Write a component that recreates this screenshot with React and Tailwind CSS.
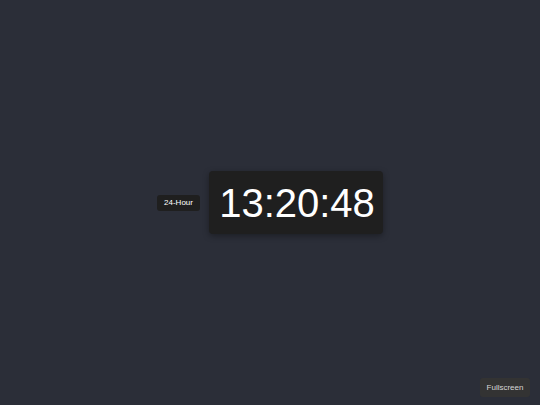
export default function App() {
  return (
    <div className="relative w-full h-screen bg-[#2b2e38] flex items-center justify-center gap-[9px]" style={{ fontFamily: '"Liberation Sans", Arial, sans-serif' }}>
      <button className="h-[16px] w-[43px] rounded-[3px] bg-[#1f1f1f] text-white text-[8px] leading-none flex items-center justify-center">
        24-Hour
      </button>
      <div className="w-[174px] h-[63px] rounded-[4px] bg-[#1f1f1f] shadow-[0_2px_6px_rgba(0,0,0,0.35)] flex items-center justify-center pl-[2px]">
        <span className="text-white text-[40px] leading-none">13:20:48</span>
      </div>
      <button className="absolute right-[10px] bottom-[8px] h-[19px] w-[50px] rounded-[3px] bg-[#333333] text-[#d6d6d6] text-[8px] leading-none flex items-center justify-center">
        Fullscreen
      </button>
    </div>
  )
}
